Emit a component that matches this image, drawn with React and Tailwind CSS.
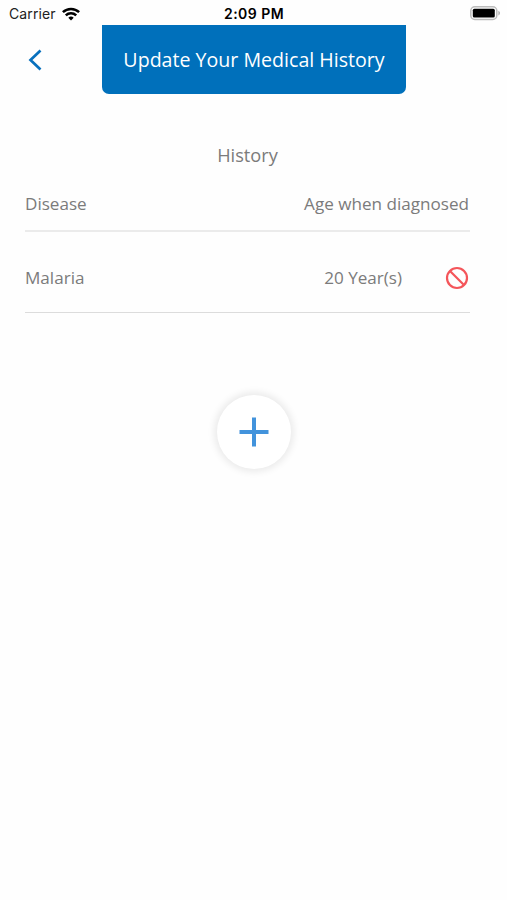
function StatusBar() {
  return (
    <div className="grid h-[25px] grid-cols-3 items-center pl-[9px] pr-[6px] pt-[2px] font-['Inter','Liberation_Sans',sans-serif] text-black">
      <div className="flex items-center gap-[6px]">
        <span className="text-[14px] leading-[20px] tracking-[0.1px] text-[#222]">Carrier</span>
        <svg className="h-[14px] w-[18px]" viewBox="0 0 18 14" fill="none" stroke="#000" strokeWidth="2.5">
          <path d="M0.9 5.2a11.6 11.6 0 0 1 16.2 0" />
          <path d="M3.8 8.3a7.4 7.4 0 0 1 10.4 0" />
          <path d="M9 13.6l-2.7-2.8a3.8 3.8 0 0 1 5.4 0z" fill="#000" stroke="none" />
        </svg>
      </div>
      <span className="-ml-[2px] text-center text-[14px] font-semibold leading-[20px] tracking-[0.45px]">2:09 PM</span>
      <svg className="h-[15px] w-[31px] justify-self-end" viewBox="0 0 31 15">
        <rect x="0.8" y="0.8" width="26" height="12.6" rx="4" fill="#fff" stroke="#bcbcbc" strokeWidth="1.5" />
        <rect x="2.8" y="2.8" width="22" height="8.8" rx="1.5" fill="#000" />
        <path d="M28.3 4.8c2.3.8 2.3 3.8 0 4.6z" fill="#b5b5b5" />
      </svg>
    </div>
  );
}

function Header() {
  return (
    <header className="flex h-[69px]">
      <button className="flex w-[102px] items-center pl-[27px]" aria-label="Back">
        <svg className="h-[22px] w-[15px]" viewBox="0 0 15 22" fill="none" stroke="#0870bd" strokeWidth="2.7">
          <path d="M13.5 1.5L3.5 11l10 9.5" />
        </svg>
      </button>
      <h1 className="flex w-[304px] items-center justify-center whitespace-nowrap rounded-b-[7px] bg-[#0070bb] text-[19.6px] text-white">
        Update Your Medical History
      </h1>
    </header>
  );
}

export default function App() {
  return (
    <div className="h-[900px] w-[507px] bg-[#fefefe] font-['Open_Sans',sans-serif] text-[#7b7b7b]">
      <StatusBar />
      <Header />
      <main className="ml-[25px] w-[445px] pt-[47px]">
        <h2 className="text-center text-[18.2px] leading-[28px]">History</h2>
        <div className="flex h-[63px] items-center justify-between border-b-2 border-[#ebebeb] pr-[1px] pt-[8px] text-[17.1px]">
          <span>Disease</span>
          <span>Age when diagnosed</span>
        </div>
        <div className="flex h-[81px] items-center border-b border-[#dcdcdc] pt-[12px] text-[17.1px]">
          <span className="grow">Malaria</span>
          <span>20 Year(s)</span>
          <svg className="ml-[43px] mr-[1px] h-[24px] w-[24px]" viewBox="0 0 24 24" fill="none" stroke="#f4555a" strokeWidth="2.2">
            <circle cx="12" cy="12" r="10" />
            <path d="M5 5l14 14" />
          </svg>
        </div>
      </main>
      <button className="ml-[217px] mt-[82px] flex h-[74px] w-[74px] items-center justify-center rounded-full bg-white shadow-[0_0_7px_3px_rgba(0,0,0,0.08)]" aria-label="Add disease">
        <svg className="h-[30px] w-[30px]" viewBox="0 0 30 30" fill="none" stroke="#4293dc" strokeWidth="4">
          <path d="M0.5 15h29M15 0.5v29" />
        </svg>
      </button>
    </div>
  );
}
